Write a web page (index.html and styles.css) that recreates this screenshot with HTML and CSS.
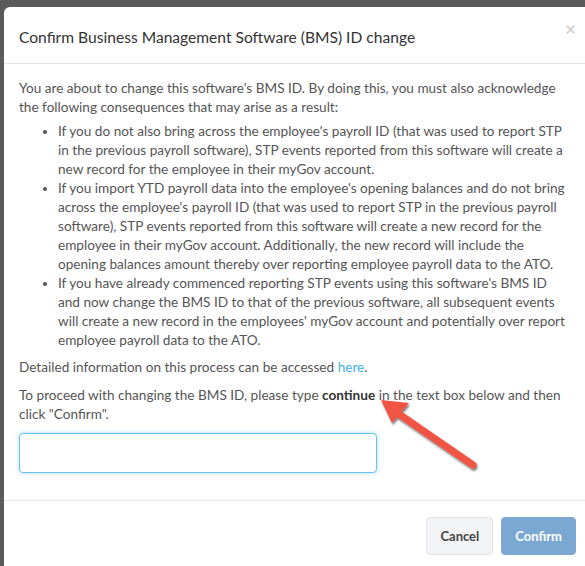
FILE: index.html
```html
<!DOCTYPE html>
<html>
  <head>
    <link rel="stylesheet" href="styles.css">
  </head>
  <body>
    <div class="modal">
      <div class="modal-header">
        <h4 class="modal-title">Confirm Business Management Software (BMS) ID change</h4>
        <span class="close">&times;</span>
      </div>

      <div class="modal-body">
        <p class="intro">You are about to change this software's BMS ID. By doing this, you must also acknowledge the following consequences that may arise as a result:</p>
        <ul>
          <li>If you do not also bring across the employee's payroll ID (that was used to report STP in the previous payroll software), STP events reported from this software will create a new record for the employee in their myGov account.</li>
          <li>If you import YTD payroll data into the employee's opening balances and do not bring across the employee's payroll ID (that was used to report STP in the previous payroll software), STP events reported from this software will create a new record for the employee in their myGov account. Additionally, the new record will include the opening balances amount thereby over reporting employee payroll data to the ATO.</li>
          <li>If you have already commenced reporting STP events using this software's BMS ID and now change the BMS ID to that of the previous software, all subsequent events will create a new record in the employees' myGov account and potentially over report employee payroll data to the ATO.</li>
        </ul>
        <p>Detailed information on this process can be accessed <a href="#">here</a>.</p>
        <p>To proceed with changing the BMS ID, please type <b>continue</b> in the text box below and then click "Confirm".</p>
        <input type="text" class="form-control">
      </div>

      <div class="modal-footer">
        <button class="btn btn-default">Cancel</button>
        <button class="btn btn-primary" disabled>Confirm</button>
      </div>

      <!-- arrow pointing at the keyword -->
      <svg class="arrow" width="110" height="90" viewBox="0 0 110 90">
        <defs>
          <filter id="shadow" x="-20%" y="-20%" width="140%" height="140%">
            <feDropShadow dx="1" dy="2" stdDeviation="1.2" flood-color="#000" flood-opacity="0.55"/>
          </filter>
        </defs>
        <g filter="url(#shadow)">
          <line x1="94" y1="70" x2="14" y2="15" stroke="#ef5443" stroke-width="7" stroke-linecap="round"/>
          <polygon points="2,5 30,8 13,28" fill="#ef5443"/>
        </g>
      </svg>
    </div>
  </body>
</html>
```

FILE: styles.css
```css
body {
  margin: 0;
  background-color: #5b5b5b;
  overflow: hidden;
  font-family: Lato, "Open Sans", sans-serif;
}

.modal {
  position: relative;
  width: 592px;
  height: 600px;
  margin: 7px 0 0 4px;
  background-color: #fff;
  border-radius: 6px 6px 0 0;
}

.modal-header {
  position: relative;
  padding: 19px 15px 15px;
  border-bottom: 1px solid #e5e5e5;
}

.modal-title {
  margin: 0;
  font-size: 15.6px;
  font-weight: normal;
  color: #333;
  line-height: 22px;
}

.close {
  position: absolute;
  top: 10px;
  right: 20px;
  font-size: 19px;
  color: #c8c8c8;
}

.modal-body {
  padding: 15px 15px 27px;
  font-size: 13.6px;
  line-height: 19px;
  color: #555;
}

.modal-body p {
  margin: 0 0 9px;
}

.modal-body p.intro {
  margin: 0 8px 5px 0;
}

.modal-body ul {
  margin: 0 11px 8px 0;
  padding-left: 39px;
}

.modal-body a {
  color: #3fb0e4;
  text-decoration: none;
}

.modal-body b {
  color: #333;
}

.form-control {
  display: block;
  box-sizing: border-box;
  width: 358px;
  height: 40px;
  margin-top: 7px;
  border: 1px solid #66c2ee;
  border-radius: 4px;
  box-shadow: 0 0 4px rgba(102, 175, 233, 0.5);
  outline: none;
}

.modal-footer {
  display: flex;
  justify-content: flex-end;
  gap: 8px;
  padding: 16px 20px;
  border-top: 1px solid #e5e5e5;
}

.btn {
  height: 38px;
  padding: 0 13px;
  font-family: Lato, sans-serif;
  font-size: 13px;
  font-weight: bold;
  border-radius: 4px;
}

.btn-default {
  background-color: #f3f4f6;
  border: 1px solid #e2e3e6;
  color: #444;
}

.btn-primary {
  background-color: #7aa8d2;
  border: 1px solid #7aa8d2;
  color: #fff;
}

.arrow {
  position: absolute;
  left: 375px;
  top: 388px;
}
```
